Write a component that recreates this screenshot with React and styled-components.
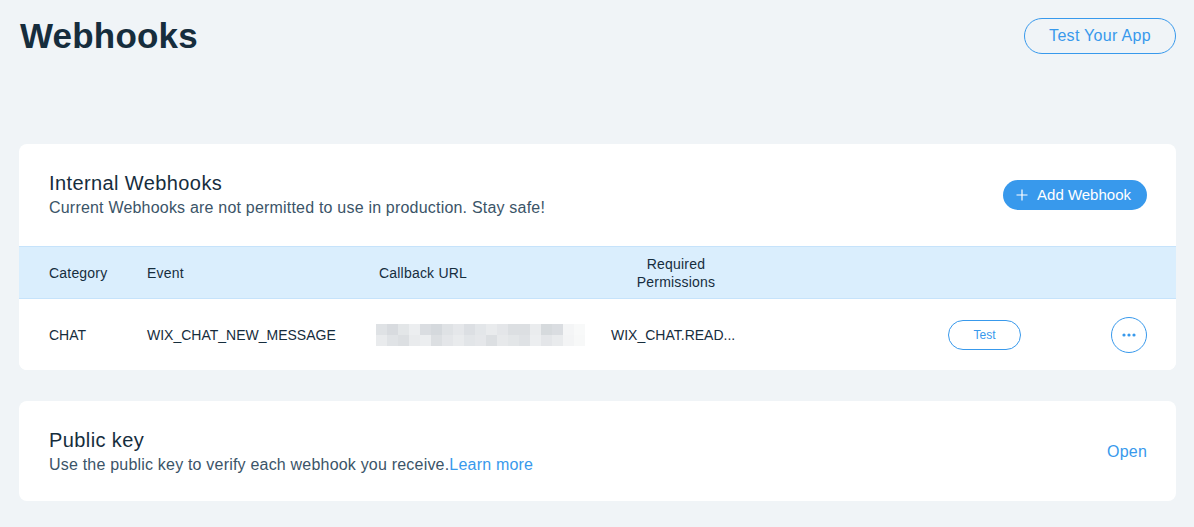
import React from "react";
import styled, { createGlobalStyle } from "styled-components";

const GlobalStyle = createGlobalStyle`
    body {
        margin: 0;
        background: #f0f4f7;
        font-family: "Liberation Sans", Arial, sans-serif;
        color: #162d3d;
    }
`;

const Page = styled.div`
    padding: 0 18px 25px 19px;
`;

const TopBar = styled.div`
    display: flex;
    justify-content: space-between;
    align-items: center;
    height: 71px;
    margin-bottom: 73px;
`;

const Title = styled.h1`
    margin: 0 0 0 1px;
    font-size: 35px;
    font-weight: bold;
    color: #162d3d;
    letter-spacing: 0.2px;
`;

const OutlineButton = styled.button`
    font-family: inherit;
    font-size: ${(p) => (p.small ? "12px" : "16px")};
    letter-spacing: ${(p) => (p.small ? "0" : "0.3px")};
    color: #3899ec;
    background: transparent;
    border: 1px solid #3899ec;
    border-radius: 20px;
    height: ${(p) => (p.small ? "30px" : "36px")};
    width: ${(p) => (p.small ? "73px" : "152px")};
    padding: 0;
    cursor: pointer;
`;

const Card = styled.section`
    background: #fff;
    border-radius: 8px;
    overflow: hidden;

    & + & {
        margin-top: 31px;
    }
`;

const CardHeader = styled.div`
    display: flex;
    justify-content: space-between;
    align-items: center;
    padding: ${(p) => p.pad || "27px 29px 27px 30px"};
`;

const CardTitle = styled.h2`
    margin: 0;
    font-size: 20px;
    line-height: 24px;
    font-weight: normal;
    letter-spacing: 0.4px;
    color: #162d3d;
`;

const CardSub = styled.p`
    margin: 3px 0 0;
    font-size: 16px;
    line-height: 20px;
    letter-spacing: 0.2px;
    color: #3b5468;
`;

const Link = styled.a`
    color: #3899ec;
    text-decoration: none;
    cursor: pointer;
    font-size: 16px;
    letter-spacing: 0.2px;
`;

const PrimaryButton = styled.button`
    display: flex;
    align-items: center;
    gap: 9px;
    font-family: inherit;
    font-size: 15px;
    color: #fff;
    background: #3899ec;
    border: none;
    border-radius: 16px;
    height: 30px;
    padding: 0 16px 0 13px;
    cursor: pointer;
`;

const TableRow = styled.div`
    display: grid;
    grid-template-columns: 98px 232px 232px 130px 1fr 36px;
    align-items: center;
    padding: 0 29px 0 30px;
    height: ${(p) => (p.head ? "51px" : "71px")};
    background: ${(p) => (p.head ? "#daeefd" : "#fff")};
    border-top: ${(p) => (p.head ? "1px solid #c6e3fb" : "none")};
    border-bottom: ${(p) => (p.head ? "1px solid #c6e3fb" : "none")};
    font-size: 14px;
    color: #162d3d;
`;

const HeadCell = styled.div`
    text-align: ${(p) => (p.center ? "center" : "left")};
    line-height: 18px;
    letter-spacing: 0.2px;
`;

const Cell = styled.div`
    white-space: nowrap;
`;

const ActionCell = styled.div`
    justify-self: end;
    margin-right: 90px;
`;

const Mosaic = styled.div`
    display: grid;
    grid-template-columns: repeat(19, 11px);
    grid-auto-rows: 11px;
    margin-left: -3px;
`;

const Pixel = styled.span`
    background: ${(p) => p.tone};
`;

const MoreButton = styled.button`
    width: 36px;
    height: 36px;
    border-radius: 50%;
    border: 1px solid #3899ec;
    background: #fff;
    display: flex;
    align-items: center;
    justify-content: center;
    padding: 0;
    cursor: pointer;
`;

const mosaicTones = [
    "#dfe2e5", "#d8dbdf", "#e3e6e8", "#eceef0", "#dadde1", "#d5d9dd", "#dfe2e5", "#e5e7ea", "#dcdfe3", "#e3e6e9",
    "#e9ebed", "#e4e6e9", "#dcdfe2", "#dcdfe2", "#eaecee", "#d6dadd", "#dadde1", "#f4f5f6", "#f8f9f9",
    "#e9ebed", "#e0e3e6", "#dcdfe2", "#e9ebed", "#eceef0", "#dcdfe2", "#e4e6e9", "#e9ebed", "#e2e5e8", "#e5e7ea",
    "#dcdfe2", "#e7e9eb", "#e3e6e8", "#dfe2e5", "#eceef0", "#e4e6e9", "#e9ebed", "#f3f4f5", "#f7f8f8",
];

const App = () => {
    return (
        <Page>
            <GlobalStyle />
            <TopBar>
                <Title>Webhooks</Title>
                <OutlineButton>Test Your App</OutlineButton>
            </TopBar>

            <Card>
                <CardHeader pad="27px 29px 28px 30px">
                    <div>
                        <CardTitle>Internal Webhooks</CardTitle>
                        <CardSub>Current Webhooks are not permitted to use in production. Stay safe!</CardSub>
                    </div>
                    <PrimaryButton>
                        <svg width="12" height="12" viewBox="0 0 12 12">
                            <path d="M6 0.5V11.5M0.5 6H11.5" stroke="#fff" strokeWidth="1.2" />
                        </svg>
                        Add Webhook
                    </PrimaryButton>
                </CardHeader>
                <TableRow head>
                    <HeadCell>Category</HeadCell>
                    <HeadCell>Event</HeadCell>
                    <HeadCell>Callback URL</HeadCell>
                    <HeadCell center>
                        Required
                        <br />
                        Permissions
                    </HeadCell>
                    <HeadCell />
                    <HeadCell />
                </TableRow>
                <TableRow>
                    <Cell>CHAT</Cell>
                    <Cell>WIX_CHAT_NEW_MESSAGE</Cell>
                    <Mosaic>
                        {mosaicTones.map((tone, i) => (
                            <Pixel key={i} tone={tone} />
                        ))}
                    </Mosaic>
                    <Cell>WIX_CHAT.READ...</Cell>
                    <ActionCell>
                        <OutlineButton small>Test</OutlineButton>
                    </ActionCell>
                    <MoreButton>
                        <svg width="14" height="4" viewBox="0 0 14 4">
                            <circle cx="2" cy="2" r="1.6" fill="#3899ec" />
                            <circle cx="7" cy="2" r="1.6" fill="#3899ec" />
                            <circle cx="12" cy="2" r="1.6" fill="#3899ec" />
                        </svg>
                    </MoreButton>
                </TableRow>
            </Card>

            <Card>
                <CardHeader pad="27px 29px 26px 30px">
                    <div>
                        <CardTitle>Public key</CardTitle>
                        <CardSub>
                            Use the public key to verify each webhook you receive.
                            <Link>Learn more</Link>
                        </CardSub>
                    </div>
                    <Link>Open</Link>
                </CardHeader>
            </Card>
        </Page>
    );
};

export default App;
